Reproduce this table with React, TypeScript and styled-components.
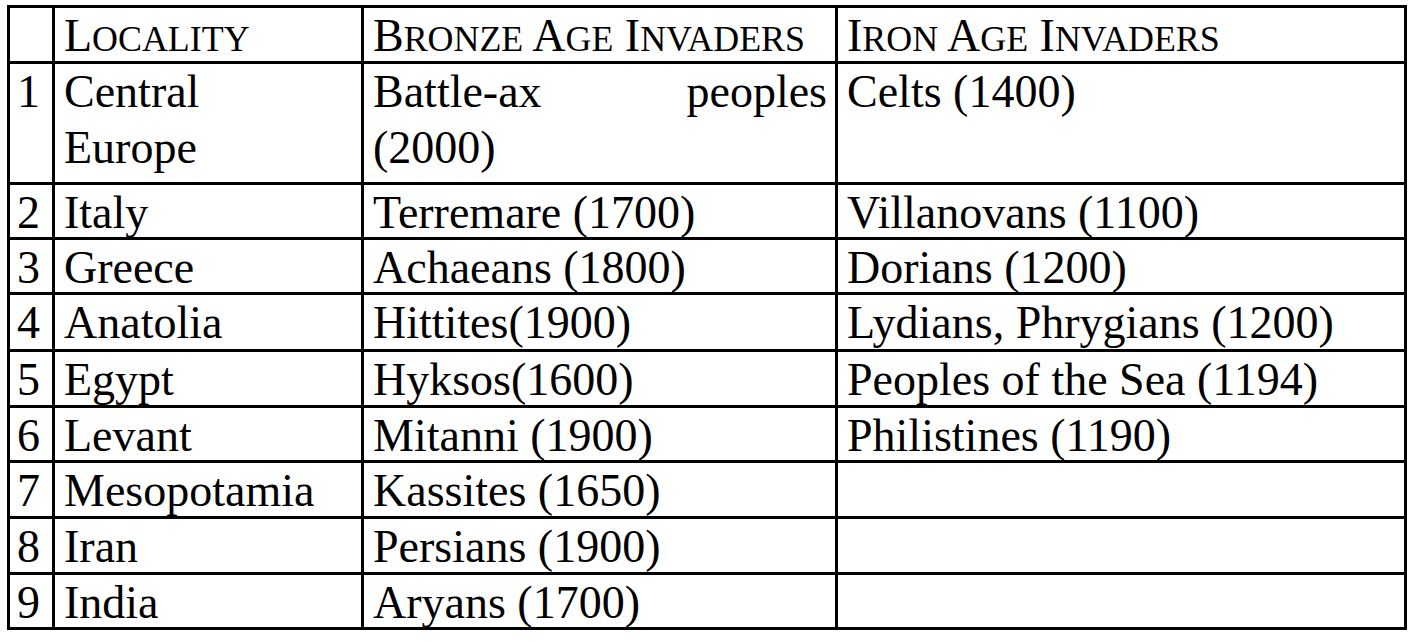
import React from "react";
import styled, { createGlobalStyle } from "styled-components";

const GlobalStyle = createGlobalStyle`
  html, body {
    margin: 0;
    padding: 0;
    background: #ffffff;
    overflow: hidden;
  }
  body {
    font-family: "Liberation Serif", "Times New Roman", serif;
    color: #000000;
  }
`;

const COLS = "45px 309px 474px 569px";

const Page = styled.div`
  padding: 5px 0 0 7px;
`;

const Table = styled.div`
  display: flex;
  flex-direction: column;
  width: max-content;
  border-top: 3px solid #000;
  border-left: 3px solid #000;
`;

const Row = styled.div<{ $h: number }>`
  display: grid;
  grid-template-columns: ${COLS};
  grid-template-rows: minmax(0, 1fr);
  height: ${(p) => p.$h}px;
`;

const Cell = styled.div<{ $num?: boolean }>`
  box-sizing: border-box;
  height: 100%;
  min-height: 0;
  border-right: 3px solid #000;
  border-bottom: 3px solid #000;
  padding: 0 8px 0 ${(p) => (p.$num ? 7 : 9)}px;
  font-size: 46px;
  line-height: 56px;
  white-space: nowrap;
  min-width: 0;
`;

const JustifiedLine = styled.span`
  display: block;
  text-align: justify;
  text-align-last: justify;
  white-space: normal;
`;

const Small = styled.span`
  font-size: 0.78em;
`;

const SmallCaps: React.FC<{ text: string }> = ({ text }) => (
  <>
    {text.split(" ").map((w, i) => (
      <React.Fragment key={i}>
        {i > 0 ? " " : null}
        {w.charAt(0).toUpperCase()}
        <Small>{w.slice(1).toUpperCase()}</Small>
      </React.Fragment>
    ))}
  </>
);

type RowData = {
  n: string;
  loc: React.ReactNode;
  bronze: React.ReactNode;
  iron: string;
  h: number;
};

const rows: RowData[] = [
  {
    n: "1",
    loc: (
      <>
        Central
        <br />
        Europe
      </>
    ),
    bronze: (
      <>
        <JustifiedLine>Battle-ax peoples</JustifiedLine>
        (2000)
      </>
    ),
    iron: "Celts (1400)",
    h: 121,
  },
  { n: "2", loc: "Italy", bronze: "Terremare (1700)", iron: "Villanovans (1100)", h: 55 },
  { n: "3", loc: "Greece", bronze: "Achaeans (1800)", iron: "Dorians (1200)", h: 55 },
  { n: "4", loc: "Anatolia", bronze: "Hittites(1900)", iron: "Lydians, Phrygians (1200)", h: 57 },
  { n: "5", loc: "Egypt", bronze: "Hyksos(1600)", iron: "Peoples of the Sea (1194)", h: 56 },
  { n: "6", loc: "Levant", bronze: "Mitanni (1900)", iron: "Philistines (1190)", h: 55 },
  { n: "7", loc: "Mesopotamia", bronze: "Kassites (1650)", iron: "", h: 56 },
  { n: "8", loc: "Iran", bronze: "Persians (1900)", iron: "", h: 56 },
  { n: "9", loc: "India", bronze: "Aryans (1700)", iron: "", h: 55 },
];

export default function App() {
  return (
    <Page>
      <GlobalStyle />
      <Table>
        <Row $h={56}>
          <Cell $num />
          <Cell>
            <SmallCaps text="Locality" />
          </Cell>
          <Cell>
            <SmallCaps text="Bronze Age Invaders" />
          </Cell>
          <Cell>
            <SmallCaps text="Iron Age Invaders" />
          </Cell>
        </Row>
        {rows.map((r) => (
          <Row key={r.n} $h={r.h}>
            <Cell $num>{r.n}</Cell>
            <Cell>{r.loc}</Cell>
            <Cell>{r.bronze}</Cell>
            <Cell>{r.iron}</Cell>
          </Row>
        ))}
      </Table>
    </Page>
  );
}
